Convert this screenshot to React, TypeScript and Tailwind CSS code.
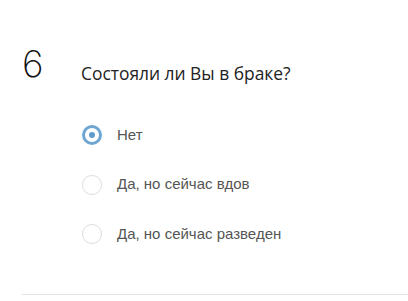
import { useState } from "react";

const options = ["Нет", "Да, но сейчас вдов", "Да, но сейчас разведен"];

export default function App() {
  const [selected, setSelected] = useState(0);

  return (
    <div className="w-[408px] h-[301px] bg-white overflow-hidden">
      <div className="pt-[44px] pl-[22px]">
        <div className="flex items-start">
          <div
            className="w-[59px] text-[37px] leading-[40px] font-extralight text-[#111]"
            style={{ fontFamily: "Inter, sans-serif" }}
          >
            6
          </div>
          <div
            className="pt-[19px] text-[17.4px] leading-[20px] text-[#222]"
            style={{ fontFamily: "'Open Sans', sans-serif" }}
          >
            Состояли ли Вы в браке?
          </div>
        </div>

        <div className="mt-[41px] pl-[60px] flex flex-col gap-[29.5px]">
          {options.map((label, i) => (
            <label
              key={label}
              className="flex items-center h-[20px] cursor-pointer"
              onClick={() => setSelected(i)}
            >
              <span
                className={
                  i === selected
                    ? "w-[20px] h-[20px] rounded-full border-[3px] border-[#6fa6d1] flex items-center justify-center"
                    : "w-[20px] h-[20px] rounded-full border border-[#dcdcdc]"
                }
              >
                {i === selected && (
                  <span className="w-[6px] h-[6px] rounded-full bg-[#5f9bcb]" />
                )}
              </span>
              <span
                className="ml-[15px] text-[15px] text-[#555]"
                style={{ fontFamily: "'Liberation Sans', Arial, sans-serif" }}
              >
                {label}
              </span>
            </label>
          ))}
        </div>

        <div className="mt-[50px] h-px bg-[#e1e4e4]" />
      </div>
    </div>
  );
}
